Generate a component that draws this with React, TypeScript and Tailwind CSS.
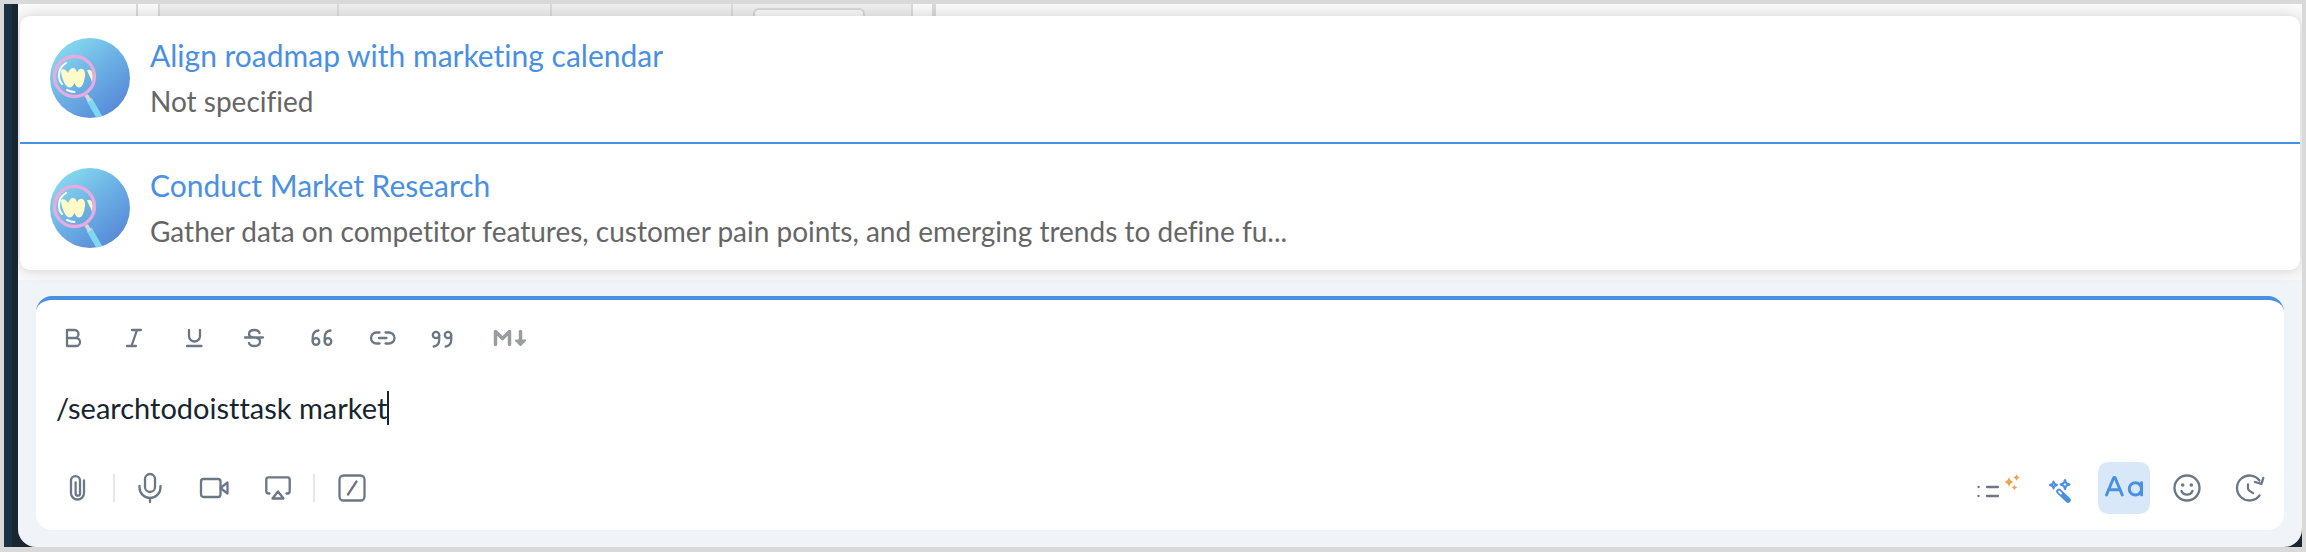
import React from 'react';
import { CaseSensitive } from 'lucide-react';

interface Task {
  title: string;
  description: string;
}

interface ToolButtonProps {
  label: string;
  className?: string;
  children: React.ReactNode;
}

interface IconProps {
  width?: number;
  strokeWidth?: number;
  children: React.ReactNode;
}

const tasks: Task[] = [
  {
    title: 'Align roadmap with marketing calendar',
    description: 'Not specified',
  },
  {
    title: 'Conduct Market Research',
    description:
      'Gather data on competitor features, customer pain points, and emerging trends to define fu...',
  },
];

const ToolButton: React.FC<ToolButtonProps> = ({ label, className = '', children }) => (
  <button
    type="button"
    aria-label={label}
    className={`flex shrink-0 items-center justify-center ${className}`}
  >
    {children}
  </button>
);

const Icon: React.FC<IconProps> = ({ width = 32, strokeWidth = 2.3, children }) => (
  <svg
    width={width}
    height="32"
    viewBox={`0 0 ${width} 32`}
    fill="none"
    stroke="currentColor"
    strokeWidth={strokeWidth}
    strokeLinecap="round"
    strokeLinejoin="round"
    className="shrink-0"
    aria-hidden="true"
  >
    {children}
  </svg>
);

const Divider: React.FC = () => <div className="mx-[3px] h-7 w-0.5 bg-[#e6e6e6]" />;

const Avatar: React.FC<{ id: string }> = ({ id }) => (
  <svg width="80" height="80" viewBox="0 0 80 80" className="shrink-0" aria-hidden="true">
    <defs>
      <linearGradient id={`${id}-bg`} x1="0.15" y1="0.1" x2="0.8" y2="0.9">
        <stop offset="0" stopColor="#85d9ee" />
        <stop offset="0.5" stopColor="#6bb0e5" />
        <stop offset="1" stopColor="#588cd8" />
      </linearGradient>
      <clipPath id={`${id}-clip`}>
        <circle cx="40" cy="40" r="40" />
      </clipPath>
    </defs>
    <g clipPath={`url(#${id}-clip)`}>
      <rect width="80" height="80" fill={`url(#${id}-bg)`} />
      <path d="M39 61l12 21" stroke="#7fd8f2" strokeWidth="6" />
      <path d="M36 57l4 6" stroke="#d9d5d6" strokeWidth="4" />
      <path
        d="M11 33c1-3 5-2 7 2 1-3 3-5 5-5 2 0 3.500 2 4 4.500 1-3 3.500-4.500 5.500-3.500 3 2 3 6 2 10-1 5-3 8.500-5.500 8.500-2 0-3.500-2-4.500-4.500-1 2.500-3 4.500-5 4.500-4 0-8-9.500-8.500-16.500z"
        fill="#fdfcc8"
      />
      <path d="M37 32.500c2-1.500 4.500-.5 5 2 1 3 1 6 0 9.500-1-4-3-7-5-11.500z" fill="#fdfcc8" />
      <path
        d="M16 25c-5 3-7 7-7 12 0 4 1 7 3 9M17 52c3 1.500 5 2 7.500 2"
        stroke="#fff"
        strokeWidth="2"
        fill="none"
        strokeLinecap="round"
      />
      <circle cx="24.500" cy="38.500" r="20" fill="none" stroke="#e9abdf" strokeWidth="3.300" />
    </g>
  </svg>
);

// Sliver of the table that stays visible above the suggestions
const TableEdge: React.FC = () => (
  <div className="flex h-3 bg-[#fcfcfc]" aria-hidden="true">
    <div className="w-[118px] border-r-2 border-[#dcdcdc]" />
    <div className="w-5" />
    <div className="w-[179px] border-l-2 border-[#dcdcdc] bg-[#f0f0f0]" />
    <div className="w-[213px] border-l-2 border-[#dcdcdc] bg-[#f0f0f0]" />
    <div className="w-[181px] border-l-2 border-[#dcdcdc] bg-[#f0f0f0]" />
    <div className="w-[182px] overflow-hidden border-x-2 border-[#dcdcdc] bg-[#f0f0f0] pt-1 pl-5">
      <div className="h-5 w-28 rounded-md border-2 border-[#d8d8d8] bg-[#fafafa]" />
    </div>
    <div className="w-[23px] border-r-4 border-[#dcdcdc]" />
  </div>
);

const TaskSuggestions: React.FC = () => (
  <section className="bg-[#fafafa] px-0.5 pb-2.5">
    <TableEdge />
    <ul className="relative rounded-[10px] bg-white shadow-[0_0_16px_rgba(0,0,0,0.18)]">
      {tasks.map((task, i) => (
        <li
          key={task.title}
          className="flex items-center gap-5 border-[#4990e2] px-[30px] py-[18px] not-last:border-b-2 first:pt-4 last:pb-4"
        >
          <Avatar id={`avatar-${i}`} />
          <div className="min-w-0">
            <a href="#" className="block truncate text-[30px] leading-[46px] text-[#4990e2]">
              {task.title}
            </a>
            <p className="truncate text-[28px] leading-[46px] text-[#666]">{task.description}</p>
          </div>
        </li>
      ))}
    </ul>
  </section>
);

const FormatBar: React.FC = () => (
  <div className="flex items-center text-[#6b7785]">
    <ToolButton label="Bold" className="w-[60px]">
      <Icon>
        <path d="M9 8h7.500a4 4 0 0 1 0 8H9zM9 16h9a4 4 0 0 1 0 8H9z" />
      </Icon>
    </ToolButton>
    <ToolButton label="Italic" className="w-[60px]">
      <Icon>
        <path d="M14 8h9M9 24h9M19 8l-5.500 16" />
      </Icon>
    </ToolButton>
    <ToolButton label="Underline" className="w-[60px]">
      <Icon>
        <path d="M11 8v6a5.500 5.500 0 0 0 11 0V8M9 24h14.500" />
      </Icon>
    </ToolButton>
    <ToolButton label="Strikethrough" className="w-[60px]">
      <Icon>
        <path d="M21.500 11c-.5-2-2.500-3-5-3-3.500 0-5.500 1.500-5.500 4 0 2 1.500 3 4 3.500h2.500c3 .5 4.500 2 4.500 4 0 3-2.500 4.500-5.500 4.500s-5-1-5.500-3M7 15.500h18" />
      </Icon>
    </ToolButton>
    <ToolButton label="Block quote" className="ml-2 w-[60px]">
      <Icon>
        <circle cx="10" cy="19.500" r="3.300" />
        <circle cx="22" cy="19.500" r="3.300" />
        <path d="M6.700 19.500v-4c0-4 2-6.500 5.800-7M18.700 19.500v-4c0-4 2-6.500 5.800-7" />
      </Icon>
    </ToolButton>
    <ToolButton label="Link" className="w-[60px]">
      <Icon>
        <path d="M13.500 21.500h-3a5.500 5.500 0 0 1 0-11h3M19.500 10.500h3.500a5.500 5.500 0 0 1 0 11h-3.500M13 16h7.500" />
      </Icon>
    </ToolButton>
    <ToolButton label="Inline quote" className="w-[60px]">
      <Icon>
        <circle cx="10" cy="13" r="3.200" />
        <circle cx="22" cy="13" r="3.200" />
        <path d="M13.200 13v4.500c0 4-1.500 6.500-5.500 7M25.200 13v4.500c0 4-1.500 6.500-5.500 7" />
      </Icon>
    </ToolButton>
    <ToolButton label="Markdown" className="ml-2 w-[60px] text-[#999ca0]">
      <Icon width={36} strokeWidth={3.5}>
        <path d="M3.500 22.500V9.500L10.500 16.500L17.500 9.500V22.500M28.500 9.500v10" />
        <path d="M24 18.500h9l-4.500 4.500z" strokeWidth="2" fill="currentColor" />
      </Icon>
    </ToolButton>
  </div>
);

const ActionBar: React.FC = () => (
  <div className="flex items-center justify-between text-[#6b7785]">
    <div className="ml-0.5 flex items-center">
      <ToolButton label="Attach file" className="h-13 w-16">
        <Icon>
          <path d="M22 8.500V21a6.500 6.500 0 0 1-13 0V8.600a4.500 4.500 0 0 1 9 0V21.500a2.200 2.200 0 0 1-4.400 0V10.500" />
        </Icon>
      </ToolButton>
      <Divider />
      <ToolButton label="Record audio" className="h-13 w-16">
        <Icon>
          <rect x="11" y="2" width="10" height="18" rx="5" />
          <path d="M5.500 14v1.500a10.500 10.500 0 0 0 21 0V14M16 26.500v3.500" />
        </Icon>
      </ToolButton>
      <ToolButton label="Record video" className="h-13 w-16">
        <Icon>
          <rect x="3" y="7" width="19.500" height="18" rx="2.500" />
          <path d="M22.500 16l7-5.500v11z" />
        </Icon>
      </ToolButton>
      <ToolButton label="Share screen" className="h-13 w-16">
        <Icon>
          <path d="M7.500 21.500H6.500A2.200 2.200 0 0 1 4.300 19.300V7.500A2.200 2.200 0 0 1 6.500 5.300H25.500A2.200 2.200 0 0 1 27.700 7.500V19.300A2.200 2.200 0 0 1 25.500 21.500H24.500" />
          <path d="M16 19.500l5.500 7h-11z" />
        </Icon>
      </ToolButton>
      <Divider />
      <ToolButton label="Shortcuts" className="h-13 w-17">
        <Icon>
          <rect x="3.500" y="3.500" width="25" height="25" rx="4" />
          <path d="M12 22.500l8.500-13" />
        </Icon>
      </ToolButton>
    </div>
    <div className="flex items-center gap-[11px]">
      <ToolButton label="Summarize" className="size-13">
        <Icon width={44}>
          <path d="M2.500 15h.1M2.500 24h.1M11 15h11M11 24h11" />
          <g fill="#f2a14c" stroke="none">
            <path d="M33 5c1 3.200 1.800 4 5 5-3.200 1-4 1.800-5 5-1-3.200-1.800-4-5-5 3.200-1 4-1.800 5-5z" />
            <path d="M40.500 2c.7 2.200 1.300 2.800 3.500 3.500-2.200.7-2.800 1.300-3.500 3.500-.7-2.200-1.300-2.800-3.500-3.500 2.200-.7 2.800-1.300 3.500-3.500z" />
            <path d="M38.500 12.500c.5 1.900 1.100 2.500 3 3-1.900.5-2.500 1.100-3 3-.5-1.900-1.100-2.500-3-3 1.900-.5 2.500-1.100 3-3z" />
          </g>
        </Icon>
      </ToolButton>
      <ToolButton label="Improve writing" className="size-13 text-[#4990e2]">
        <Icon strokeWidth={2}>
          <path d="M8.500 9.500l1 2.500 2.500 1-2.500 1-1 2.500-1-2.500-2.500-1 2.500-1zM20 8l1.300 3.200 3.200 1.300-3.200 1.300L20 17l-1.300-3.200-3.200-1.300 3.200-1.300z" />
          <path d="M14 19.500L23 28" strokeWidth="5.500" />
          <path d="M14 19.500l2 2" stroke="#fff" strokeWidth="1.800" />
        </Icon>
      </ToolButton>
      <ToolButton label="Text formatting" className="size-13 rounded-[10px] bg-[#d9e8f9] text-[#4990e2]">
        <CaseSensitive size={42} strokeWidth={1.7} />
      </ToolButton>
      <ToolButton label="Emoji" className="size-13">
        <Icon>
          <circle cx="16" cy="16" r="12.500" />
          <path d="M10.500 19a6 6 0 0 0 11 0" />
          <g fill="currentColor" stroke="none">
            <circle cx="11.700" cy="13" r="1.800" />
            <circle cx="20.300" cy="13" r="1.800" />
          </g>
        </Icon>
      </ToolButton>
      <ToolButton label="Schedule message" className="size-13">
        <Icon>
          <path d="M25.500 23.500a12.500 12.500 0 1 1 0-15" />
          <path d="M21 10l6.500 1.800L29.300 6M14 12.500v4c0 2 2 3 5 4.500" />
        </Icon>
      </ToolButton>
    </div>
  </div>
);

const Composer: React.FC = () => (
  <section className="px-[18px] pt-4 pb-[17px]">
    <div className="rounded-2xl border-t-4 border-[#4990e2] bg-white px-2 pt-[22px] pb-4">
      <FormatBar />
      <div className="my-7 flex h-13 items-center pl-3">
        <input
          type="text"
          aria-label="Message"
          defaultValue="/searchtodoisttask market"
          className="[field-sizing:content] bg-transparent text-[29px] text-[#17252f] outline-none"
        />
        <span className="h-[34px] w-0.5 bg-[#17252f]" />
      </div>
      <ActionBar />
    </div>
  </section>
);

const App: React.FC = () => (
  <div className="bg-[#d9d9d9] p-1 pb-[5px] font-[Lato,sans-serif] [font-variant-ligatures:no-common-ligatures]">
    <div className="border-l-8 border-[#193244] bg-[#1a2630] pl-1.5">
      <main className="overflow-hidden rounded-b-[18px] bg-[#f0f4f8]">
        <TaskSuggestions />
        <Composer />
      </main>
    </div>
  </div>
);

export default App;
